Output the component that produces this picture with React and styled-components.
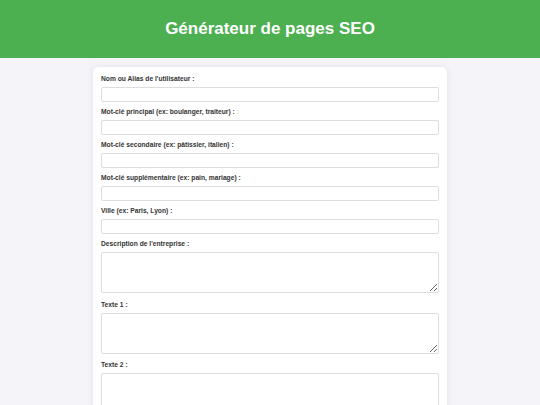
import React from "react";
import styled, { createGlobalStyle } from "styled-components";

const GlobalStyle = createGlobalStyle`
  * { box-sizing: border-box; }
  body {
    margin: 0;
    background: #f4f4f9;
    font-family: "Liberation Sans", Arial, sans-serif;
    color: #333;
  }
`;

const fields = [
  { id: "nom", label: "Nom ou Alias de l'utilisateur :" },
  { id: "kw1", label: "Mot-clé principal (ex: boulanger, traiteur) :" },
  { id: "kw2", label: "Mot-clé secondaire (ex: pâtissier, italien) :" },
  { id: "kw3", label: "Mot-clé supplémentaire (ex: pain, mariage) :" },
  { id: "ville", label: "Ville (ex: Paris, Lyon) :" },
  { id: "desc", label: "Description de l'entreprise :", multi: true },
  { id: "t1", label: "Texte 1 :", multi: true },
  { id: "t2", label: "Texte 2 :", multi: true },
  { id: "t3", label: "Texte 3 :", multi: true },
];

export default function App() {
  return (
    <>
      <GlobalStyle />
      <Header>
        <Title>Générateur de pages SEO</Title>
      </Header>
      <Card>
        {fields.map((f) => (
          <Field key={f.id}>
            <Label htmlFor={f.id}>{f.label}</Label>
            {f.multi ? <TextArea id={f.id} /> : <Input id={f.id} type="text" />}
          </Field>
        ))}
        <SubmitButton type="button">Générer la page</SubmitButton>
      </Card>
    </>
  );
}

const Header = styled.header`
  background: #4caf50;
  color: #fff;
  padding: 19px 0;
  text-align: center;
`;

const Title = styled.h1`
  margin: 0;
  font-size: 17px;
  line-height: 20px;
  font-weight: bold;
`;

const Card = styled.main`
  width: 354px;
  margin: 9px auto 20px;
  background: #fff;
  border-radius: 5px;
  padding: 8px 8px 10px;
  box-shadow: 0 0 6px rgba(0, 0, 0, 0.08);
`;

const Field = styled.div`
  display: flex;
  flex-direction: column;
`;

const Label = styled.label`
  display: block;
  font-size: 6.7px;
  line-height: 8px;
  font-weight: bold;
  color: #333;
  margin-bottom: 4px;
`;

const Input = styled.input`
  display: block;
  width: 100%;
  height: 15px;
  margin: 0 0 6px;
  padding: 2px 4px;
  border: 1px solid #ddd;
  border-radius: 2px;
  font-family: inherit;
  font-size: 7px;
  outline: none;
`;

const TextArea = styled.textarea`
  display: block;
  width: 100%;
  height: 41px;
  margin: 0 0 7.5px;
  padding: 2px 4px;
  border: 1px solid #ddd;
  border-radius: 2px;
  font-family: inherit;
  font-size: 7px;
  resize: vertical;
  outline: none;
`;

const SubmitButton = styled.button`
  background: #4caf50;
  color: #fff;
  border: none;
  border-radius: 3px;
  padding: 5px 10px;
  font-family: inherit;
  font-size: 8px;
  cursor: pointer;
`;
